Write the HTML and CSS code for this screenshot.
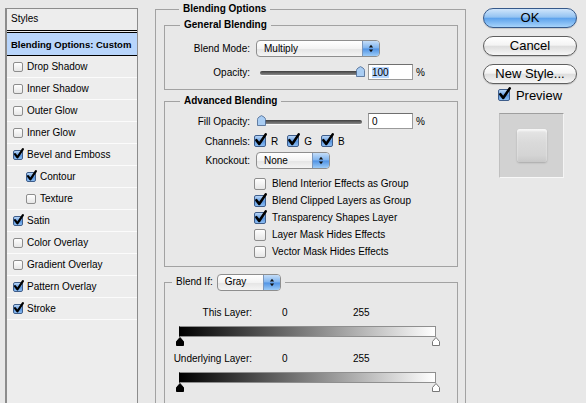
FILE: index.html
```html
<!DOCTYPE html>
<html lang="en">
<head>
<meta charset="UTF-8">
<title>Layer Style</title>
<link rel="stylesheet" href="styles.css">
</head>
<body>

<div class="dialog">

  <!-- Effects list -->
  <div class="styles-panel">
    <div class="styles-head">Styles</div>
    <div class="styles-item selected">Blending Options: Custom</div>
    <div class="styles-item"><span class="cb small"></span>Drop Shadow</div>
    <div class="styles-item"><span class="cb small"></span>Inner Shadow</div>
    <div class="styles-item"><span class="cb small"></span>Outer Glow</div>
    <div class="styles-item"><span class="cb small"></span>Inner Glow</div>
    <div class="styles-item"><span class="cb small on"><svg viewBox="0 0 12 12"><path d="M2.2 6.2 L4.8 9.6 L10.8 0.8"/></svg></span>Bevel and Emboss</div>
    <div class="styles-item sub"><span class="cb small on"><svg viewBox="0 0 12 12"><path d="M2.2 6.2 L4.8 9.6 L10.8 0.8"/></svg></span>Contour</div>
    <div class="styles-item sub"><span class="cb small"></span>Texture</div>
    <div class="styles-item"><span class="cb small on"><svg viewBox="0 0 12 12"><path d="M2.2 6.2 L4.8 9.6 L10.8 0.8"/></svg></span>Satin</div>
    <div class="styles-item"><span class="cb small"></span>Color Overlay</div>
    <div class="styles-item"><span class="cb small"></span>Gradient Overlay</div>
    <div class="styles-item"><span class="cb small on"><svg viewBox="0 0 12 12"><path d="M2.2 6.2 L4.8 9.6 L10.8 0.8"/></svg></span>Pattern Overlay</div>
    <div class="styles-item"><span class="cb small on"><svg viewBox="0 0 12 12"><path d="M2.2 6.2 L4.8 9.6 L10.8 0.8"/></svg></span>Stroke</div>
  </div>

  <fieldset class="group main">
    <legend>Blending Options</legend>

    <fieldset class="group general">
      <legend>General Blending</legend>
      <div class="row first">
        <label class="lbl">Blend Mode:</label>
        <div class="popup mode">Multiply<span class="stepper"><svg viewBox="0 0 7 10"><path d="M3.5 0.5 L6 3.8 H1 Z M3.5 9.5 L6 6.2 H1 Z"/></svg></span></div>
      </div>
      <div class="row">
        <label class="lbl">Opacity:</label>
        <div class="slider"><span class="thumb" style="left: 99px"><svg viewBox="0 0 9 11"><path d="M0.5 10.5 V4.5 Q0.5 3 2 2 L4.5 0.6 L7 2 Q8.5 3 8.5 4.5 V10.5 Z"/></svg></span></div>
        <span class="num"><span class="hilite">100</span></span>
        <span class="pct">%</span>
      </div>
    </fieldset>

    <fieldset class="group advanced">
      <legend>Advanced Blending</legend>
      <div class="row tall first">
        <label class="lbl">Fill Opacity:</label>
        <div class="slider"><span class="thumb" style="left: 0px"><svg viewBox="0 0 9 11"><path d="M0.5 10.5 V4.5 Q0.5 3 2 2 L4.5 0.6 L7 2 Q8.5 3 8.5 4.5 V10.5 Z"/></svg></span></div>
        <span class="num">0</span>
        <span class="pct">%</span>
      </div>
      <div class="row tall">
        <label class="lbl">Channels:</label>
        <span class="channel"><span class="cb on"><svg viewBox="0 0 12 12"><path d="M2.2 6.2 L4.8 9.6 L10.8 0.8"/></svg></span>R</span>
        <span class="channel"><span class="cb on"><svg viewBox="0 0 12 12"><path d="M2.2 6.2 L4.8 9.6 L10.8 0.8"/></svg></span>G</span>
        <span class="channel"><span class="cb on"><svg viewBox="0 0 12 12"><path d="M2.2 6.2 L4.8 9.6 L10.8 0.8"/></svg></span>B</span>
      </div>
      <div class="row knock">
        <label class="lbl">Knockout:</label>
        <div class="popup knockout">None<span class="stepper"><svg viewBox="0 0 7 10"><path d="M3.5 0.5 L6 3.8 H1 Z M3.5 9.5 L6 6.2 H1 Z"/></svg></span></div>
      </div>
      <div class="options">
        <div class="option"><span class="cb"></span>Blend Interior Effects as Group</div>
        <div class="option"><span class="cb on"><svg viewBox="0 0 12 12"><path d="M2.2 6.2 L4.8 9.6 L10.8 0.8"/></svg></span>Blend Clipped Layers as Group</div>
        <div class="option"><span class="cb on"><svg viewBox="0 0 12 12"><path d="M2.2 6.2 L4.8 9.6 L10.8 0.8"/></svg></span>Transparency Shapes Layer</div>
        <div class="option"><span class="cb"></span>Layer Mask Hides Effects</div>
        <div class="option"><span class="cb"></span>Vector Mask Hides Effects</div>
      </div>
    </fieldset>

    <fieldset class="group blendif">
      <legend>
        <span class="legend-text">Blend If:</span>
        <span class="popup gray">Gray<span class="stepper"><svg viewBox="0 0 7 10"><path d="M3.5 0.5 L6 3.8 H1 Z M3.5 9.5 L6 6.2 H1 Z"/></svg></span></span>
      </legend>

      <div class="range-head first">
        <span class="range-lbl">This Layer:</span>
        <span class="range-lo">0</span>
        <span class="range-hi">255</span>
      </div>
      <div class="ramp"></div>
      <div class="stops">
        <svg class="stop dark" viewBox="0 0 8 9"><path d="M0.5 8.5 V4.5 L4 0.5 L7.5 4.5 V8.5 Z"/></svg>
        <svg class="stop light" viewBox="0 0 8 9"><path d="M0.5 8.5 V4.5 L4 0.5 L7.5 4.5 V8.5 Z"/></svg>
      </div>

      <div class="range-head">
        <span class="range-lbl">Underlying Layer:</span>
        <span class="range-lo">0</span>
        <span class="range-hi">255</span>
      </div>
      <div class="ramp"></div>
      <div class="stops">
        <svg class="stop dark" viewBox="0 0 8 9"><path d="M0.5 8.5 V4.5 L4 0.5 L7.5 4.5 V8.5 Z"/></svg>
        <svg class="stop light" viewBox="0 0 8 9"><path d="M0.5 8.5 V4.5 L4 0.5 L7.5 4.5 V8.5 Z"/></svg>
      </div>
    </fieldset>
  </fieldset>

  <!-- Buttons and preview -->
  <div class="actions">
    <button class="btn default">OK</button>
    <button class="btn">Cancel</button>
    <button class="btn">New Style...</button>
    <div class="preview-toggle"><span class="cb on"><svg viewBox="0 0 12 12"><path d="M2.2 6.2 L4.8 9.6 L10.8 0.8"/></svg></span>Preview</div>
    <div class="swatch"><div class="swatch-tile"></div></div>
  </div>

</div>

</body>
</html>
```

FILE: styles.css
```css
body {
  margin: 0;
  padding: 0;
  width: 586px;
  height: 403px;
  overflow: hidden;
  background-color: #e8e8e8;
  font-family: "Liberation Sans", Arial, sans-serif;
  font-size: 10px;
  color: #000;
}

.dialog {
  display: flex;
  align-items: flex-start;
  height: 403px;
  overflow: hidden;
  padding-left: 5px;
}

/* Styles list */
.styles-panel {
  width: 133px;
  height: 395px;
  margin-top: 8px;
  box-sizing: border-box;
  background-color: #ededed;
  border: 1px solid #8c8c8c;
  border-left: 2px solid #8c8c8c;
  border-bottom: none;
}

.styles-head {
  height: 21px;
  line-height: 20px;
  padding-left: 4px;
  border-bottom: 3px double #000;
}

.styles-item {
  display: flex;
  align-items: center;
  height: 21px;
  padding-left: 6px;
  white-space: nowrap;
  border-bottom: 1px solid #fbfbfb;
}

.styles-item.sub {
  padding-left: 19px;
}

.styles-item.selected {
  padding-left: 4px;
  height: 22px;
  font-size: 9.5px;
  font-weight: bold;
  background-color: #b8d5fb;
  border-bottom: 1px solid #000;
}

/* Checkboxes */
.cb {
  position: relative;
  display: inline-block;
  flex: none;
  width: 12px;
  height: 12px;
  box-sizing: border-box;
  border: 1px solid #8d8d8d;
  border-radius: 2px;
  background: linear-gradient(#ffffff, #e6e6e6);
  margin-right: 6px;
}

.cb.small {
  width: 10px;
  height: 10px;
  margin-right: 4px;
}

.cb.on {
  border-color: #3e5d8a;
  background: linear-gradient(#b9d6f7, #5b97e0 55%, #8cbdf2);
}

.cb svg {
  position: absolute;
  left: -1px;
  top: -3px;
  width: 13px;
  height: 14px;
  overflow: visible;
}

.cb.small svg {
  left: -1px;
  top: -3px;
  width: 11px;
  height: 12px;
}

.cb svg path {
  fill: none;
  stroke: #000;
  stroke-width: 2.4;
  stroke-linecap: round;
  stroke-linejoin: round;
}

/* Group boxes */
.group {
  margin: 0;
  padding: 0;
  min-width: 0;
  border: 1px solid #a2a2a2;
}

.group legend {
  padding: 0 4px;
  margin-left: 15px;
  line-height: 12px;
  font-weight: bold;
}

.group.main {
  width: 311px;
  height: 400px;
  box-sizing: border-box;
  margin: 3px 0 0 17px;
  padding: 0 7px 0 8px;
  border-bottom: none;
}

.group.general {
  margin-top: 4px;
  padding-bottom: 9px;
}

.group.advanced {
  margin-top: 5px;
  padding-bottom: 6px;
}

.group.blendif {
  margin-top: 6px;
  height: 130px;
  border-bottom: none;
}

.group.blendif legend {
  display: flex;
  align-items: center;
  height: 18px;
  margin-left: 7px;
  font-weight: normal;
}

.legend-text {
  margin-right: 4px;
}

/* Form rows */
.row {
  display: flex;
  align-items: center;
  height: 16px;
  margin-top: 8px;
}

.row.first {
  margin-top: 9px;
}

.row.tall {
  height: 20px;
  margin-top: 0;
}

.advanced .row.tall.first {
  margin-top: 4px;
}

.row.knock {
  height: 19px;
  margin-top: 0;
}

.lbl {
  width: 85px;
  text-align: right;
  margin-right: 6px;
  flex: none;
}

.popup {
  display: flex;
  align-items: center;
  height: 17px;
  box-sizing: border-box;
  padding-left: 7px;
  border: 1px solid #8e8e8e;
  border-radius: 4px;
  background: linear-gradient(#ffffff, #f3f3f3 50%, #e4e4e4 51%, #f4f4f4);
  font-weight: normal;
}

.popup.mode {
  width: 124px;
}

.popup.knockout {
  width: 74px;
}

.popup.gray {
  width: 64px;
}

.stepper {
  display: flex;
  align-items: center;
  justify-content: center;
  margin-left: auto;
  width: 16px;
  height: 100%;
  border-left: 1px solid #7b96bb;
  border-radius: 0 3px 3px 0;
  background: linear-gradient(#c4ddf8, #7eb3ee 48%, #4f92e4 52%, #9ccbf7);
}

.stepper svg {
  width: 6px;
  height: 9px;
}

.stepper path {
  fill: #111;
}

.slider {
  position: relative;
  flex: none;
  width: 108px;
  height: 12px;
  margin-left: 1px;
}

.slider::before {
  content: "";
  position: absolute;
  left: 3px;
  right: 3px;
  top: 5px;
  height: 4px;
  border-radius: 2px;
  background: linear-gradient(#3f3f3f, #8a8a8a);
  box-shadow: 0 1px 0 #fafafa;
}

.thumb {
  position: absolute;
  top: 0;
  width: 9px;
  height: 11px;
}

.thumb svg {
  display: block;
  width: 9px;
  height: 11px;
}

.thumb path {
  fill: #a9cdf3;
  stroke: #47648e;
  stroke-width: 0.8;
}

.num {
  display: flex;
  align-items: center;
  flex: none;
  width: 45px;
  height: 16px;
  box-sizing: border-box;
  margin-left: 3px;
  padding-left: 3px;
  background-color: #fff;
  border: 1px solid #9a9a9a;
  border-top-color: #6f6f6f;
}

.hilite {
  background-color: #b5d5ff;
}

.pct {
  margin-left: 3px;
}

.channel {
  display: flex;
  align-items: center;
  margin-right: 9px;
}

.channel:first-of-type {
  margin-left: -2px;
}

.channel .cb {
  margin-right: 5px;
}

.options {
  margin-top: 5px;
  padding-left: 89px;
}

.option {
  display: flex;
  align-items: center;
  height: 17px;
}

/* Blend If ranges */
.range-head {
  display: flex;
  align-items: center;
  height: 14px;
  margin-top: 6px;
  white-space: nowrap;
}

.range-head.first {
  margin-top: 14px;
}

.range-lbl {
  width: 87px;
  text-align: right;
  margin-right: 30px;
}

.range-lo {
  width: 71px;
}

.ramp {
  width: 257px;
  height: 11px;
  box-sizing: border-box;
  margin: 7px 0 0 14px;
  border: 1px solid #8f8f8f;
  border-left-color: #000;
  background: linear-gradient(to right, #000, #fff);
}

.stops {
  display: flex;
  justify-content: space-between;
  width: 264px;
  height: 8px;
  margin-left: 11px;
}

.stop {
  width: 8px;
  height: 9px;
}

.stop.dark path {
  fill: #000;
  stroke: #000;
}

.stop.light path {
  fill: #fff;
  stroke: #777;
}

/* Buttons column */
.actions {
  display: flex;
  flex-direction: column;
  align-items: center;
  width: 94px;
  margin: 8px 0 0 17px;
}

.btn {
  width: 94px;
  height: 20px;
  margin-bottom: 8px;
  padding: 0;
  border: 1px solid #5f5f5f;
  border-radius: 10px;
  background: linear-gradient(#ffffff, #f4f4f4 45%, #dedede 52%, #f6f6f6);
  font-family: "Liberation Sans", Arial, sans-serif;
  font-size: 13px;
  line-height: 18px;
  color: #000;
  box-shadow: 0 1px 1px rgba(0, 0, 0, 0.15);
}

.btn.default {
  border-color: #36598a;
  background: linear-gradient(#cfe5fb, #94c3f2 45%, #5ea3ec 52%, #a6d3fb);
}

.preview-toggle {
  display: flex;
  align-items: center;
  height: 14px;
  margin-top: -4px;
  font-size: 13px;
}

.swatch {
  display: flex;
  align-items: center;
  justify-content: center;
  width: 65px;
  height: 65px;
  box-sizing: border-box;
  margin-top: 11px;
  margin-left: 2px;
  background-color: #d2d2d2;
  border-top: 1px solid #9e9e9e;
  border-left: 1px solid #c0c0c0;
  border-right: 1px solid #f4f4f4;
  border-bottom: 1px solid #f8f8f8;
}

.swatch-tile {
  width: 30px;
  height: 33px;
  margin-left: 1px;
  border-radius: 3px;
  background: linear-gradient(#e6e6e6, #dadada 40%, #d4d4d4 80%, #c8c8c8);
  box-shadow: 0 1px 2px rgba(0, 0, 0, 0.2), inset 0 2px 2px rgba(255, 255, 255, 0.7);
  filter: blur(0.5px);
}
```
